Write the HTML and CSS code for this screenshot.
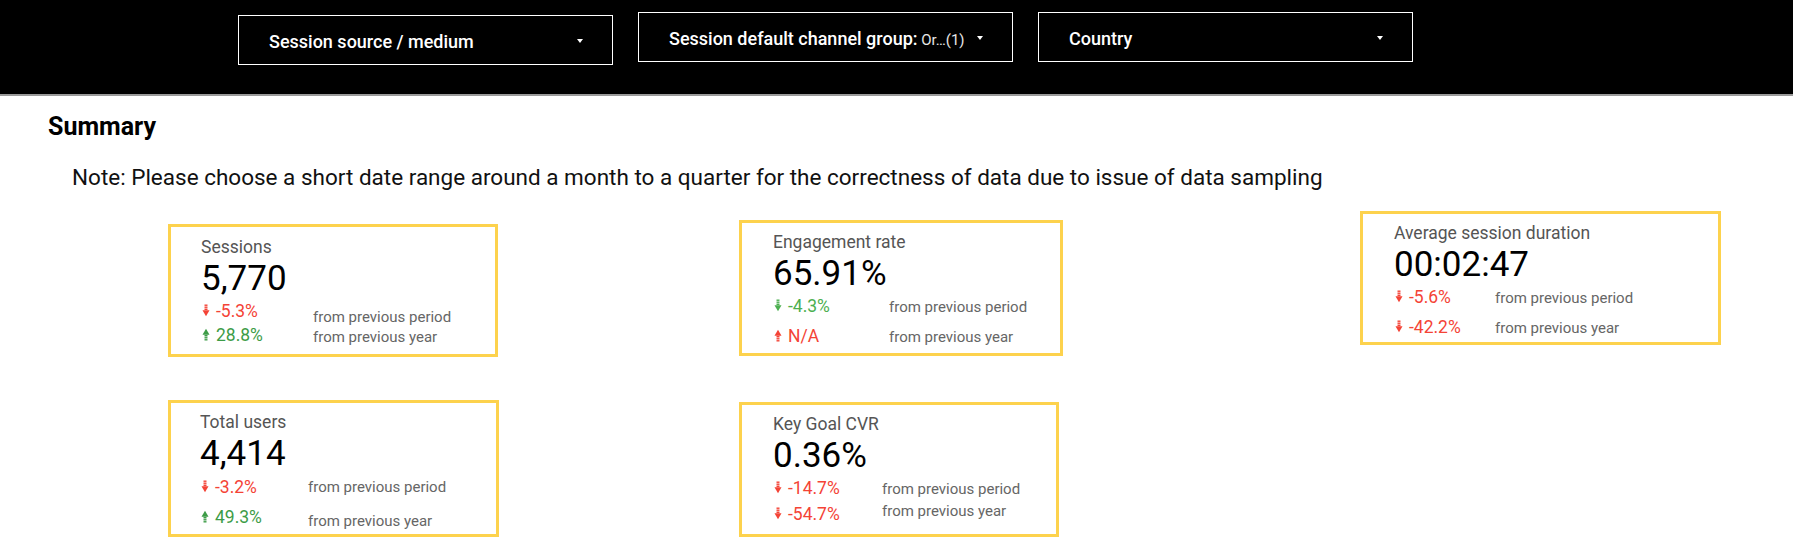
FILE: index.html
```html
<!DOCTYPE html>
<html lang="en">
<head>
  <meta charset="UTF-8">
  <title>Summary Report</title>
  <link rel="stylesheet" href="styles.css">
</head>
<body>
  <div class="topbar">
    <div class="filter filter-first">
      <span class="filter-label">Session source / medium</span>
      <span class="caret"></span>
    </div>
    <div class="filter">
      <span class="filter-label">Session default channel group:<span class="filter-value"> Or…(1)</span></span>
      <span class="caret"></span>
    </div>
    <div class="filter">
      <span class="filter-label">Country</span>
      <span class="caret"></span>
    </div>
  </div>

  <h2 class="summary">Summary</h2>
  <p class="note">Note: Please choose a short date range around a month to a quarter for the correctness of data due to issue of data sampling</p>

  <div class="cards">
    <div class="col col-1">
      <div class="card card-sessions">
        <div class="card-title">Sessions</div>
        <div class="card-value">5,770</div>
        <div class="changes">
          <div class="deltas">
            <span class="delta down"><svg class="arrow" viewBox="0 0 8 12"><rect x="2.5" y="0" width="3" height="1.4"/><rect x="2.5" y="2" width="3" height="1.4"/><rect x="2.5" y="4" width="3" height="1.6"/><polygon points="0.5,5.8 7.5,5.8 4,11.8"/></svg>-5.3%</span>
            <span class="delta up"><svg class="arrow" viewBox="0 0 8 12"><polygon points="0.5,6.2 7.5,6.2 4,0.2"/><rect x="2.5" y="6.4" width="3" height="1.6"/><rect x="2.5" y="8.6" width="3" height="1.4"/><rect x="2.5" y="10.6" width="3" height="1.4"/></svg>28.8%</span>
          </div>
          <div class="notes">
            <span>from previous period</span>
            <span>from previous year</span>
          </div>
        </div>
      </div>

      <div class="card card-users">
        <div class="card-title">Total users</div>
        <div class="card-value">4,414</div>
        <div class="changes">
          <div class="deltas">
            <span class="delta down"><svg class="arrow" viewBox="0 0 8 12"><rect x="2.5" y="0" width="3" height="1.4"/><rect x="2.5" y="2" width="3" height="1.4"/><rect x="2.5" y="4" width="3" height="1.6"/><polygon points="0.5,5.8 7.5,5.8 4,11.8"/></svg>-3.2%</span>
            <span class="delta up"><svg class="arrow" viewBox="0 0 8 12"><polygon points="0.5,6.2 7.5,6.2 4,0.2"/><rect x="2.5" y="6.4" width="3" height="1.6"/><rect x="2.5" y="8.6" width="3" height="1.4"/><rect x="2.5" y="10.6" width="3" height="1.4"/></svg>49.3%</span>
          </div>
          <div class="notes">
            <span>from previous period</span>
            <span>from previous year</span>
          </div>
        </div>
      </div>
    </div>

    <div class="col col-2">
      <div class="card card-engagement">
        <div class="card-title">Engagement rate</div>
        <div class="card-value">65.91%</div>
        <div class="changes">
          <div class="deltas">
            <span class="delta good"><svg class="arrow" viewBox="0 0 8 12"><rect x="2.5" y="0" width="3" height="1.4"/><rect x="2.5" y="2" width="3" height="1.4"/><rect x="2.5" y="4" width="3" height="1.6"/><polygon points="0.5,5.8 7.5,5.8 4,11.8"/></svg>-4.3%</span>
            <span class="delta bad"><svg class="arrow" viewBox="0 0 8 12"><polygon points="0.5,6.2 7.5,6.2 4,0.2"/><rect x="2.5" y="6.4" width="3" height="1.6"/><rect x="2.5" y="8.6" width="3" height="1.4"/><rect x="2.5" y="10.6" width="3" height="1.4"/></svg>N/A</span>
          </div>
          <div class="notes">
            <span>from previous period</span>
            <span>from previous year</span>
          </div>
        </div>
      </div>

      <div class="card card-cvr">
        <div class="card-title">Key Goal CVR</div>
        <div class="card-value">0.36%</div>
        <div class="changes">
          <div class="deltas">
            <span class="delta down"><svg class="arrow" viewBox="0 0 8 12"><rect x="2.5" y="0" width="3" height="1.4"/><rect x="2.5" y="2" width="3" height="1.4"/><rect x="2.5" y="4" width="3" height="1.6"/><polygon points="0.5,5.8 7.5,5.8 4,11.8"/></svg>-14.7%</span>
            <span class="delta down"><svg class="arrow" viewBox="0 0 8 12"><rect x="2.5" y="0" width="3" height="1.4"/><rect x="2.5" y="2" width="3" height="1.4"/><rect x="2.5" y="4" width="3" height="1.6"/><polygon points="0.5,5.8 7.5,5.8 4,11.8"/></svg>-54.7%</span>
          </div>
          <div class="notes">
            <span>from previous period</span>
            <span>from previous year</span>
          </div>
        </div>
      </div>
    </div>

    <div class="col col-3">
      <div class="card card-duration">
        <div class="card-title">Average session duration</div>
        <div class="card-value">00:02:47</div>
        <div class="changes">
          <div class="deltas">
            <span class="delta down"><svg class="arrow" viewBox="0 0 8 12"><rect x="2.5" y="0" width="3" height="1.4"/><rect x="2.5" y="2" width="3" height="1.4"/><rect x="2.5" y="4" width="3" height="1.6"/><polygon points="0.5,5.8 7.5,5.8 4,11.8"/></svg>-5.6%</span>
            <span class="delta down"><svg class="arrow" viewBox="0 0 8 12"><rect x="2.5" y="0" width="3" height="1.4"/><rect x="2.5" y="2" width="3" height="1.4"/><rect x="2.5" y="4" width="3" height="1.6"/><polygon points="0.5,5.8 7.5,5.8 4,11.8"/></svg>-42.2%</span>
          </div>
          <div class="notes">
            <span>from previous period</span>
            <span>from previous year</span>
          </div>
        </div>
      </div>
    </div>
  </div>
</body>
</html>
```

FILE: styles.css
```css
/* Base */
* {
  box-sizing: border-box;
  margin: 0;
  padding: 0;
}

body {
  font-family: Roboto, "Noto Sans", Arial, sans-serif;
  background-color: #fff;
  color: #000;
  width: 1793px;
}

/* Filter bar */
.topbar {
  display: flex;
  align-items: flex-start;
  gap: 25px;
  height: 96px;
  padding: 12px 0 0 238px;
  background-color: #000;
  border-bottom: 2px solid #9a9a9a;
}

.filter {
  display: flex;
  align-items: center;
  width: 375px;
  height: 50px;
  padding: 2px 0 0 30px;
  border: 1px solid #fff;
  color: #fff;
}

.filter-first {
  margin-top: 3px;
}

.filter-label {
  flex: 1;
  font-size: 18px;
  font-weight: 500;
  white-space: nowrap;
}

.filter-value {
  font-size: 15px;
  font-weight: 400;
  color: #e6e6e6;
}

.caret {
  width: 0;
  height: 0;
  margin-right: 29px;
  border-left: 3.5px solid transparent;
  border-right: 3.5px solid transparent;
  border-top: 4px solid #fff;
}

/* Headings */
.summary {
  margin: 16px 0 0 48px;
  font-size: 25px;
  font-weight: 700;
  line-height: 29px;
}

.note {
  margin: 23px 0 0 72px;
  font-size: 22.5px;
  line-height: 27px;
  color: #111;
}

/* Scorecards */
.cards {
  display: flex;
  align-items: flex-start;
  margin-top: 20px;
}

.col {
  display: flex;
  flex-direction: column;
}

.col-1 {
  margin: 13px 0 0 168px;
  gap: 43px;
}

.col-2 {
  margin: 9px 0 0 240px;
  gap: 46px;
}

.col-3 {
  margin-left: 297px;
}

.card {
  --delta-w: 110px;
  --delta-pad: 2px;
  --delta-gap: 10px;
  --note-pad: 3px;
  --note-gap: 10px;
  padding: 9px 0 0 31px;
  border: 3px solid #fdd24d;
  background-color: #fff;
}

.card-sessions {
  width: 330px;
  height: 133px;
  padding: 10px 0 0 30px;
  --delta-w: 112px;
  --delta-gap: 4px;
  --note-pad: 8px;
  --note-gap: 0px;
}

.card-users {
  width: 331px;
  height: 137px;
  padding-left: 29px;
  --delta-w: 108px;
  --delta-pad: 3px;
  --note-gap: 14px;
}

.card-engagement {
  width: 324px;
  height: 136px;
  --delta-w: 116px;
}

.card-cvr {
  width: 320px;
  height: 135px;
  --delta-w: 109px;
  --delta-gap: 6px;
  --note-gap: 2px;
}

.card-duration {
  width: 361px;
  height: 134px;
  --delta-w: 101px;
}

.card-title {
  font-size: 17.5px;
  line-height: 20px;
  color: #555;
  white-space: nowrap;
}

.card-value {
  margin-top: 1px;
  font-size: 35px;
  line-height: 41px;
  color: #000;
}

.changes {
  display: flex;
}

.deltas {
  display: flex;
  flex-direction: column;
  width: var(--delta-w);
  padding-top: var(--delta-pad);
  gap: var(--delta-gap);
}

.notes {
  display: flex;
  flex-direction: column;
  padding-top: var(--note-pad);
  gap: var(--note-gap);
  font-size: 15px;
  line-height: 20px;
  color: #666;
  white-space: nowrap;
}

.delta {
  font-size: 17.5px;
  line-height: 20px;
  white-space: nowrap;
}

.arrow {
  width: 8px;
  height: 13px;
  margin: 0 6px 0 1px;
  fill: currentColor;
  vertical-align: baseline;
}

.down,
.bad {
  color: #f44336;
}

.up {
  color: #3d9c47;
}

.good {
  color: #4caf50;
}
```
